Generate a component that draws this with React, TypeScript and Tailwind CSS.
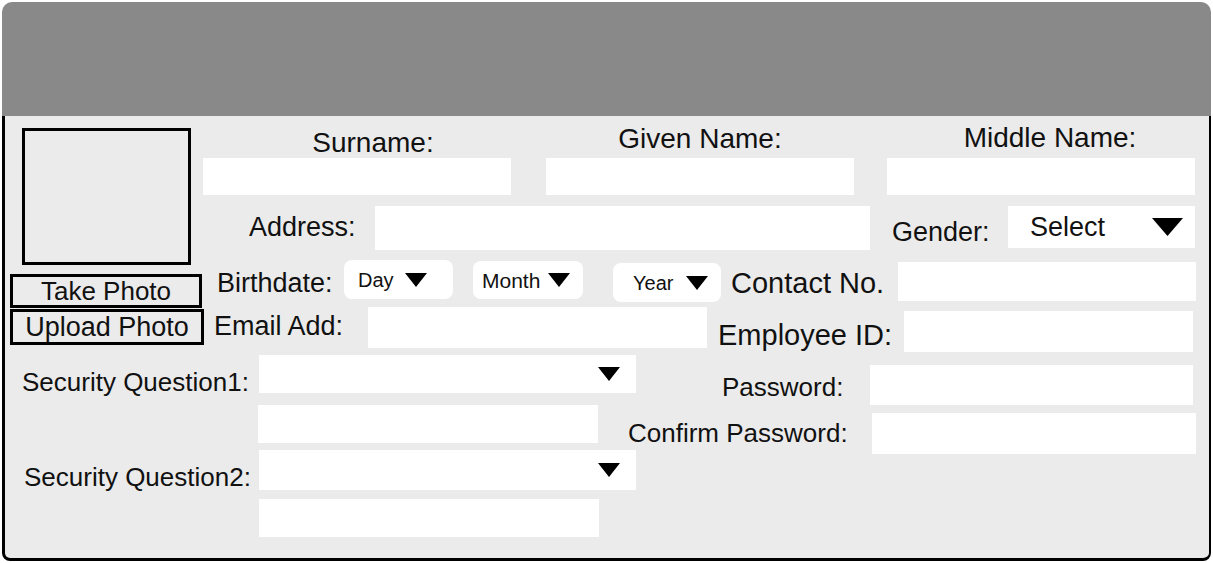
import React from "react";

function Caret({ className }: { className: string }) {
  return (
    <svg viewBox="0 0 22 14" preserveAspectRatio="none" className={className}>
      <polygon points="0,0 22,0 11,14" fill="#000" />
    </svg>
  );
}

export default function App() {
  return (
    <div className="w-[1213px] h-[563px] bg-white px-[2px] pt-[2px] font-['Liberation_Sans',Arial,sans-serif] text-[#111] leading-none">
      {/* Header bar */}
      <div className="h-[114px] rounded-t-[10px] bg-[#898989]" />

      {/* Form body */}
      <div className="h-[445px] bg-[#ebebeb] border-l-[3px] border-r-2 border-b-[3px] border-black rounded-b-[8px]">
        {/* Top section */}
        <div className="flex">
          {/* Photo column */}
          <div className="w-[198px] flex flex-col items-start shrink-0">
            <div className="ml-[17px] mt-[12px] w-[169px] h-[137px] border-[3px] border-black" />
            <button className="ml-[5px] mt-[9px] w-[192px] h-[34px] border-[3px] border-black flex items-center justify-center text-[26px] whitespace-nowrap">
              Take Photo
            </button>
            <button className="ml-[5px] mt-[1px] w-[194px] h-[36px] border-[3px] border-black flex items-center justify-center text-[27px] whitespace-nowrap">
              Upload Photo
            </button>
          </div>

          {/* Fields */}
          <div className="flex flex-col">
            {/* Names */}
            <div className="flex h-[79px]">
              <div className="w-[308px] flex flex-col">
                <div className="mt-[13px] pl-[32px] text-center text-[28px] whitespace-nowrap">Surname:</div>
                <div className="mt-auto h-[37px] bg-white" />
              </div>
              <div className="ml-[35px] w-[308px] flex flex-col">
                <div className="mt-[9px] text-center text-[28px] whitespace-nowrap">Given Name:</div>
                <div className="mt-auto h-[37px] bg-white" />
              </div>
              <div className="ml-[33px] w-[308px] flex flex-col">
                <div className="mt-[8px] pl-[18px] text-center text-[28px] whitespace-nowrap">Middle Name:</div>
                <div className="mt-auto h-[37px] bg-white" />
              </div>
            </div>

            {/* Address / Gender */}
            <div className="mt-[11px] flex items-start">
              <div className="ml-[46px] mt-[8px] w-[108px] text-[27px] whitespace-nowrap">Address:</div>
              <div className="ml-[18px] w-[495px] h-[44px] bg-white" />
              <div className="ml-[22px] mt-[13px] w-[98px] text-[27px] whitespace-nowrap">Gender:</div>
              <div className="ml-[18px] w-[187px] h-[42px] bg-white flex items-center pl-[22px] pr-[12px]">
                <span className="text-[27px]">Select</span>
                <Caret className="ml-auto w-[31px] h-[18px]" />
              </div>
            </div>

            {/* Birthdate / Contact */}
            <div className="mt-[10px] flex items-start">
              <div className="ml-[14px] mt-[10px] w-[116px] text-[27px] whitespace-nowrap">Birthdate:</div>
              <div className="ml-[11px] w-[109px] h-[39px] rounded-[8px] bg-white flex items-center pl-[14px]">
                <span className="text-[20px]">Day</span>
                <Caret className="ml-[11px] w-[22px] h-[14px]" />
              </div>
              <div className="ml-[20px] mt-[1px] w-[110px] h-[38px] rounded-[8px] bg-white flex items-center pl-[9px]">
                <span className="text-[21px]">Month</span>
                <Caret className="ml-[8px] w-[22px] h-[14px]" />
              </div>
              <div className="ml-[30px] mt-[3px] w-[108px] h-[39px] rounded-[8px] bg-white flex items-center pl-[20px]">
                <span className="text-[20px]">Year</span>
                <Caret className="ml-[13px] w-[22px] h-[14px]" />
              </div>
              <div className="ml-[10px] mt-[9px] w-[156px] text-[29px] whitespace-nowrap">Contact No.</div>
              <div className="ml-[11px] mt-[2px] w-[298px] h-[39px] bg-white" />
            </div>

            {/* Email / Employee ID */}
            <div className="mt-[5px] flex items-start">
              <div className="ml-[11px] mt-[6px] w-[129px] text-[27px] whitespace-nowrap">Email Add:</div>
              <div className="ml-[25px] w-[339px] h-[41px] bg-white" />
              <div className="ml-[11px] mt-[14px] w-[173px] text-[29px] whitespace-nowrap">Employee ID:</div>
              <div className="ml-[13px] mt-[4px] w-[289px] h-[41px] bg-white" />
            </div>
          </div>
        </div>

        {/* Bottom section */}
        <div className="flex">
          {/* Security questions */}
          <div className="w-[631px] shrink-0 flex flex-col items-start">
            <div className="mt-[3px] flex items-start">
              <div className="ml-[17px] mt-[14px] w-[225px] text-[26px] whitespace-nowrap">Security Question1:</div>
              <div className="ml-[12px] w-[377px] h-[38px] bg-white flex items-center justify-end pr-[16px]">
                <Caret className="w-[22px] h-[14px]" />
              </div>
            </div>
            <div className="mt-[10px] ml-[253px] w-[340px] h-[38px] bg-white" />
            <div className="mt-[7px] flex items-start">
              <div className="ml-[19px] mt-[14px] w-[224px] text-[26px] whitespace-nowrap">Security Question2:</div>
              <div className="ml-[11px] w-[377px] h-[40px] bg-white flex items-center justify-end pr-[16px]">
                <Caret className="w-[22px] h-[14px]" />
              </div>
            </div>
            <div className="mt-[9px] ml-[254px] w-[340px] h-[38px] bg-white" />
          </div>

          {/* Passwords */}
          <div className="flex flex-col">
            <div className="mt-[3px] flex items-start">
              <div className="ml-[86px] mt-[19px] w-[120px] text-[26px] whitespace-nowrap">Password:</div>
              <div className="ml-[28px] mt-[10px] w-[323px] h-[40px] bg-white" />
            </div>
            <div className="flex items-start">
              <div className="-ml-[8px] mt-[15px] w-[220px] text-[26px] whitespace-nowrap">Confirm Password:</div>
              <div className="ml-[24px] mt-[8px] w-[324px] h-[41px] bg-white" />
            </div>
          </div>
        </div>
      </div>
    </div>
  );
}
